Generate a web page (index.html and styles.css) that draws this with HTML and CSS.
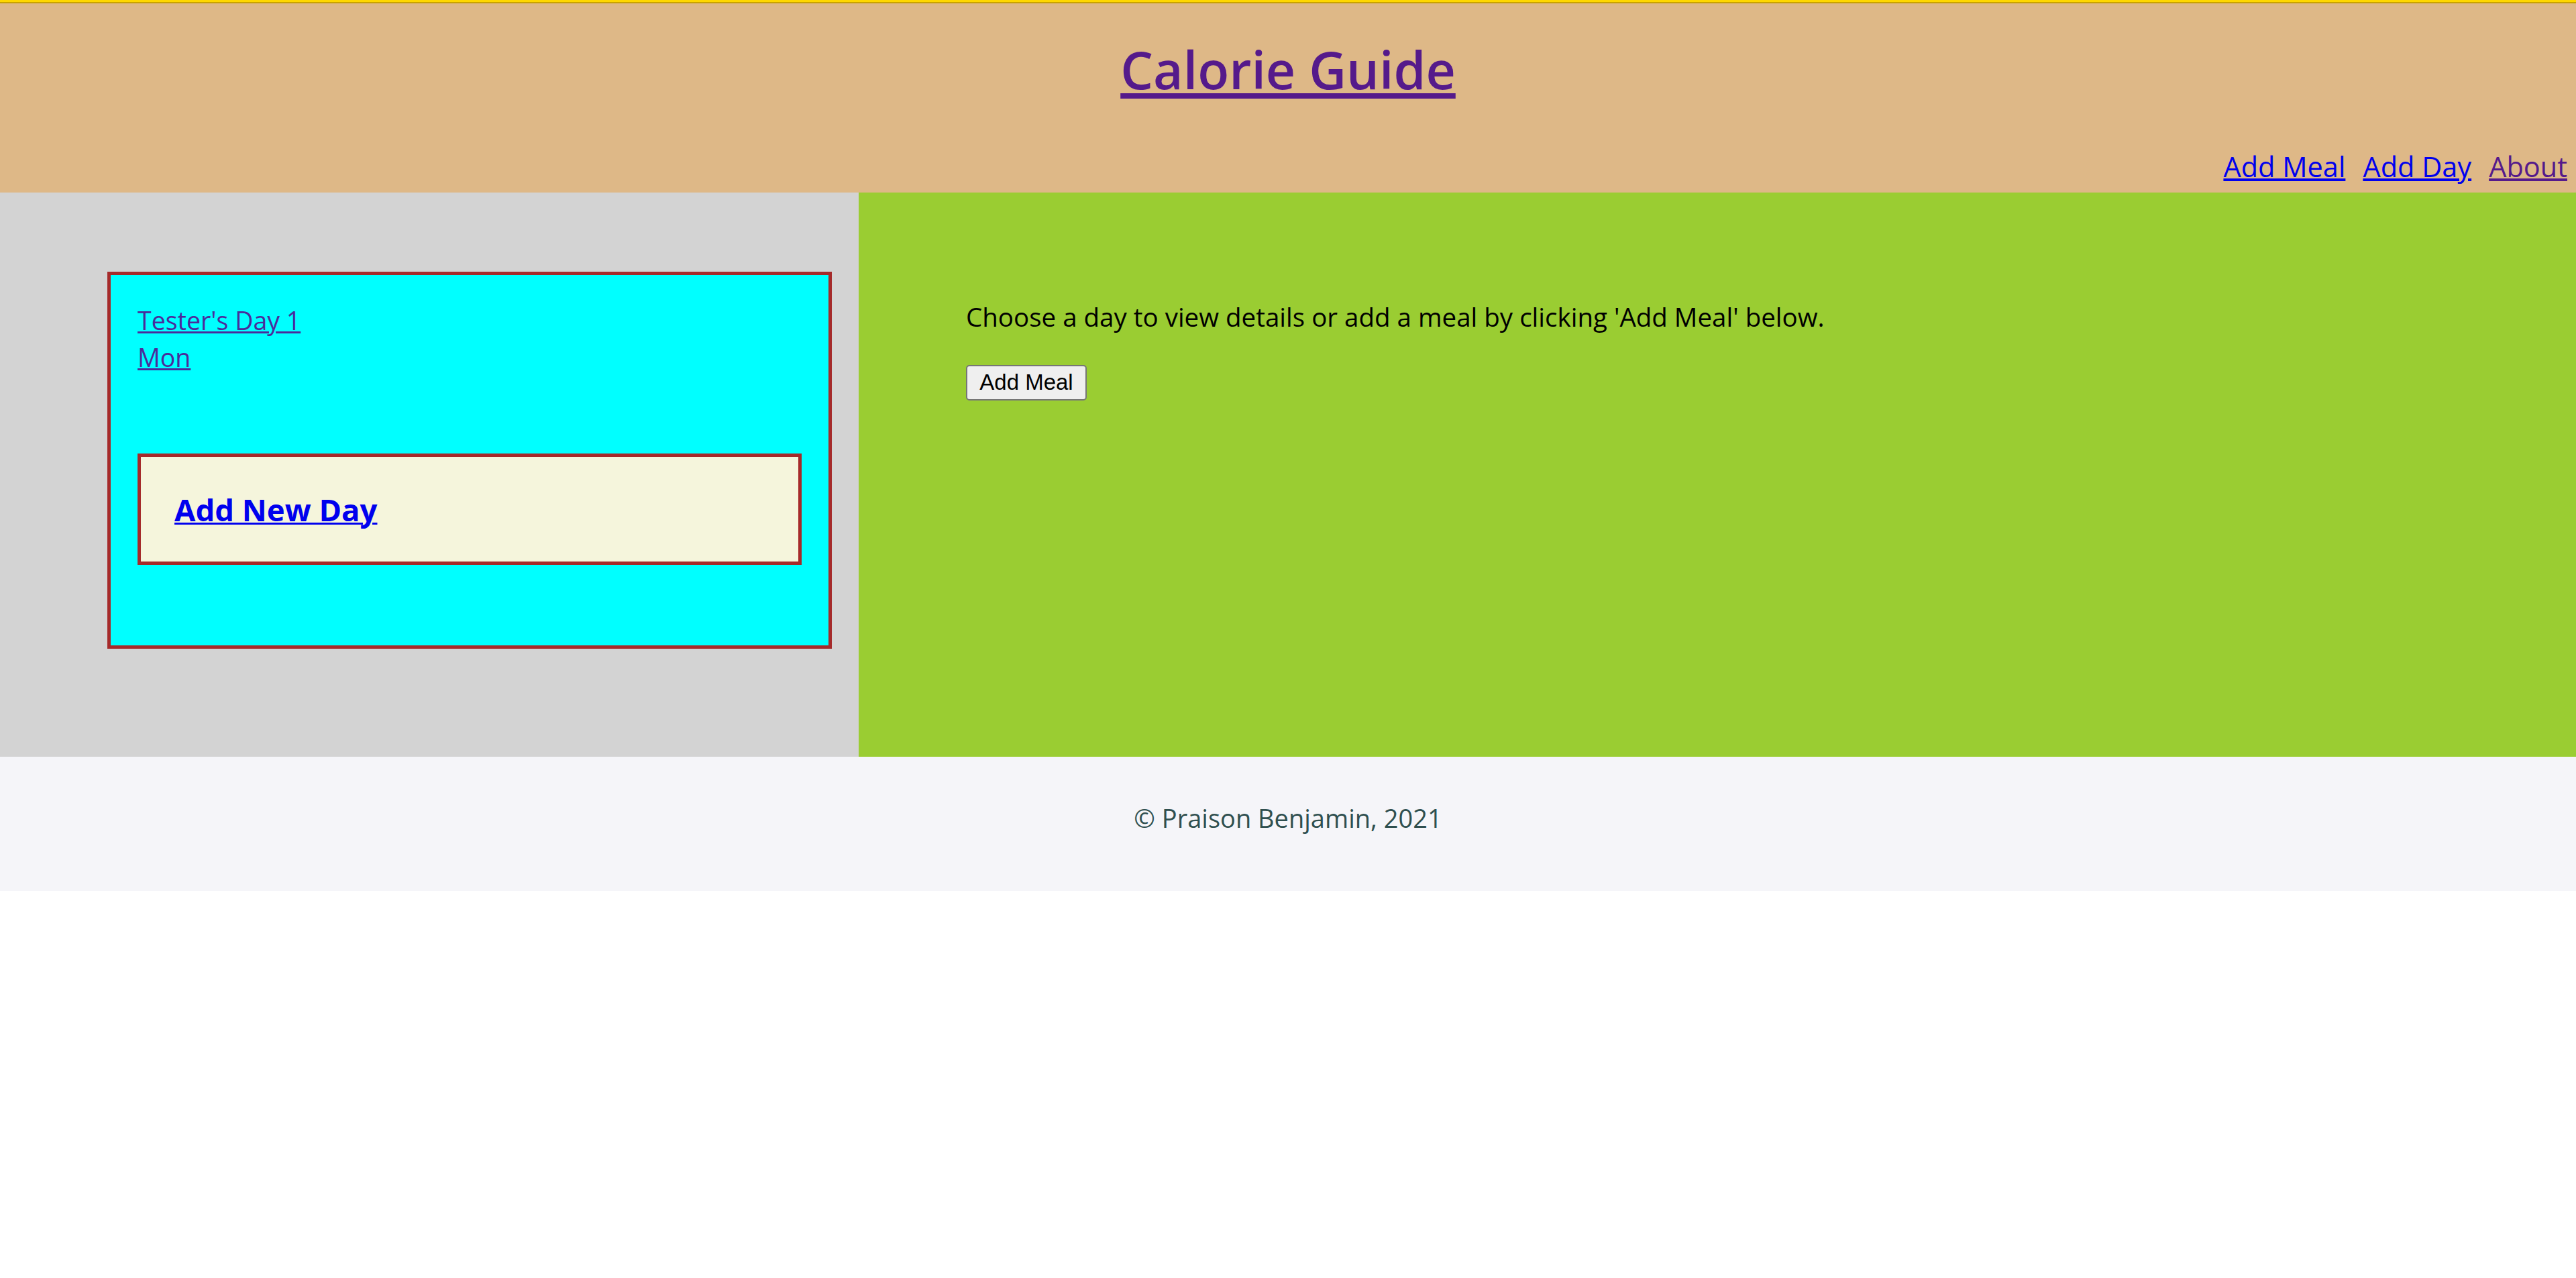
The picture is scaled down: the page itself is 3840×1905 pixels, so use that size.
FILE: index.html
```html
<!DOCTYPE html>
<html>
<head>
<meta charset="utf-8">
<title>Calorie Guide</title>
<link rel="stylesheet" href="styles.css">
</head>
<body>
<header class="site-header">
  <h1 class="title"><a href="#" class="visited">Calorie Guide</a></h1>
  <nav class="nav">
    <a href="#">Add Meal</a>
    <a href="#">Add Day</a>
    <a href="#" class="visited">About</a>
  </nav>
</header>
<main class="main">
  <aside class="sidebar">
    <div class="card">
      <a href="#" class="day-link">Tester's Day 1</a>
      <a href="#" class="day-link">Mon</a>
      <div class="new-day">
        <h3 class="new-day-title"><a href="#">Add New Day</a></h3>
      </div>
    </div>
  </aside>
  <section class="content">
    <p class="intro">Choose a day to view details or add a meal by clicking 'Add Meal' below.</p>
    <button class="btn" type="button">Add Meal</button>
  </section>
</main>
<footer class="footer">
  <p class="copy">© Praison Benjamin, 2021</p>
</footer>
</body>
</html>
```
FILE: styles.css
```css
html, body {
  margin: 0;
  padding: 0;
  background: #ffffff;
}
body {
  font-family: "Open Sans", "Noto Sans", sans-serif;
  font-size: 38.5px;
  color: #000;
}
a { color: #0000ee; }
a.visited { color: #551a8b; }

.site-header {
  background: #deb887;
  border-top: 5px solid #ffd700;
  height: 282px;
  display: flex;
  flex-direction: column;
  position: relative;
}
.site-header::before {
  content: "";
  position: absolute;
  left: 0; right: 0; top: -2px;
  height: 2px;
  background: #c9a200;
}
.title {
  margin: 49px 0 0;
  text-align: center;
  font-size: 77px;
  font-weight: 600;
  line-height: 100px;
}
.title a { text-decoration-thickness: 8px; text-underline-offset: 6px; }
.nav {
  margin-top: auto;
  display: flex;
  justify-content: flex-end;
  gap: 26px;
  padding: 0 13px 14px 0;
  font-size: 41.5px;
  line-height: 50px;
}
.nav a { text-decoration-thickness: 4px; }

.main {
  display: grid;
  grid-template-columns: 1280px 1fr;
}
.sidebar {
  background: #d3d3d3;
  padding: 118px 40px 161px 160px;
}
.card {
  background: #00ffff;
  border: 5px solid #a52a2a;
  padding: 40px;
}
.day-link {
  display: block;
  width: max-content;
  font-size: 37.5px;
  line-height: 55px;
  color: #4b2b9b;
  text-decoration-thickness: 3px;
}
.new-day {
  margin: 116px 0 80px;
  background: #f5f5dc;
  border: 5px solid #a52a2a;
  padding: 0 50px;
}
.new-day-title {
  margin: 0;
  padding: 47px 0;
  font-size: 45.5px;
  line-height: 62px;
  font-weight: 700;
}
.new-day-title a { text-decoration-thickness: 3px; }

.content {
  background: #9acd32;
  padding: 118px 160px 0;
}
.intro {
  margin: 40px 0 41px;
  line-height: 54px;
}
.btn {
  font-family: "Liberation Sans", Arial, sans-serif;
  font-size: 33px;
  background: #efefef;
  border: 2px solid #767676;
  border-radius: 5px;
  padding: 5px 15px;
  height: 53px;
  width: 180px;
  color: #000;
}

.footer {
  background: #f5f5f9;
  height: 200px;
  box-sizing: border-box;
  padding-bottom: 18px;
  display: flex;
  align-items: center;
  justify-content: center;
}
.copy {
  margin: 0;
  color: #2f4f4f;
  font-size: 38px;
  line-height: 54px;
}
```
